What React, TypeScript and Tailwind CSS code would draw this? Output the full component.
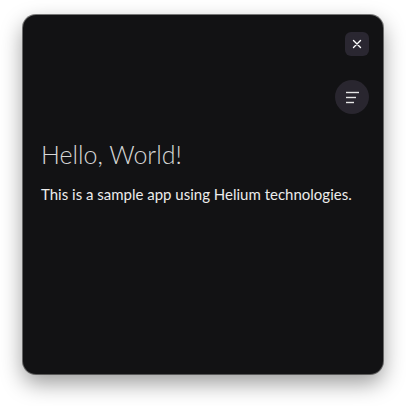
import React from "react";

export default function App() {
  return (
    <div className="w-[406px] h-[406px] bg-white pt-[15px] pl-[23px]" style={{ fontFamily: 'Lato, "Noto Sans", sans-serif' }}>
      <div className="w-[360px] h-[359px] rounded-[13px] bg-[#121214] shadow-[0_9px_22px_rgba(0,0,0,0.4),0_0_0_1px_rgba(0,0,0,0.5)] flex flex-col pl-[18px] pr-[14px] pt-[17px]">
        <div className="flex justify-end">
          <button className="w-[24px] h-[24px] rounded-[6px] bg-[#2a2731] flex items-center justify-center">
            <svg width="10" height="10" viewBox="0 0 10 10">
              <path d="M1.5 1.5L8.5 8.5M8.5 1.5L1.5 8.5" stroke="#ffffff" strokeWidth="1.4" strokeLinecap="round" />
            </svg>
          </button>
        </div>
        <div className="flex justify-end mt-[24px]">
          <button className="w-[34px] h-[34px] rounded-full bg-[#29262f] flex items-center justify-center">
            <svg width="16" height="14" viewBox="0 0 16 14">
              <path d="M2 2.5H15" stroke="#e6e6e6" strokeWidth="1.4" />
              <path d="M2 7.5H12" stroke="#e6e6e6" strokeWidth="1.4" />
              <path d="M2 12.5H10" stroke="#e6e6e6" strokeWidth="1.4" />
            </svg>
          </button>
        </div>
        <h1 className="mt-[24px] text-[25px] leading-[32px] font-light text-[#d6d6d6] whitespace-nowrap">Hello, World!</h1>
        <p className="mt-[14px] text-[15px] leading-[20px] text-[#ececec] whitespace-nowrap">This is a sample app using Helium technologies.</p>
      </div>
    </div>
  );
}
